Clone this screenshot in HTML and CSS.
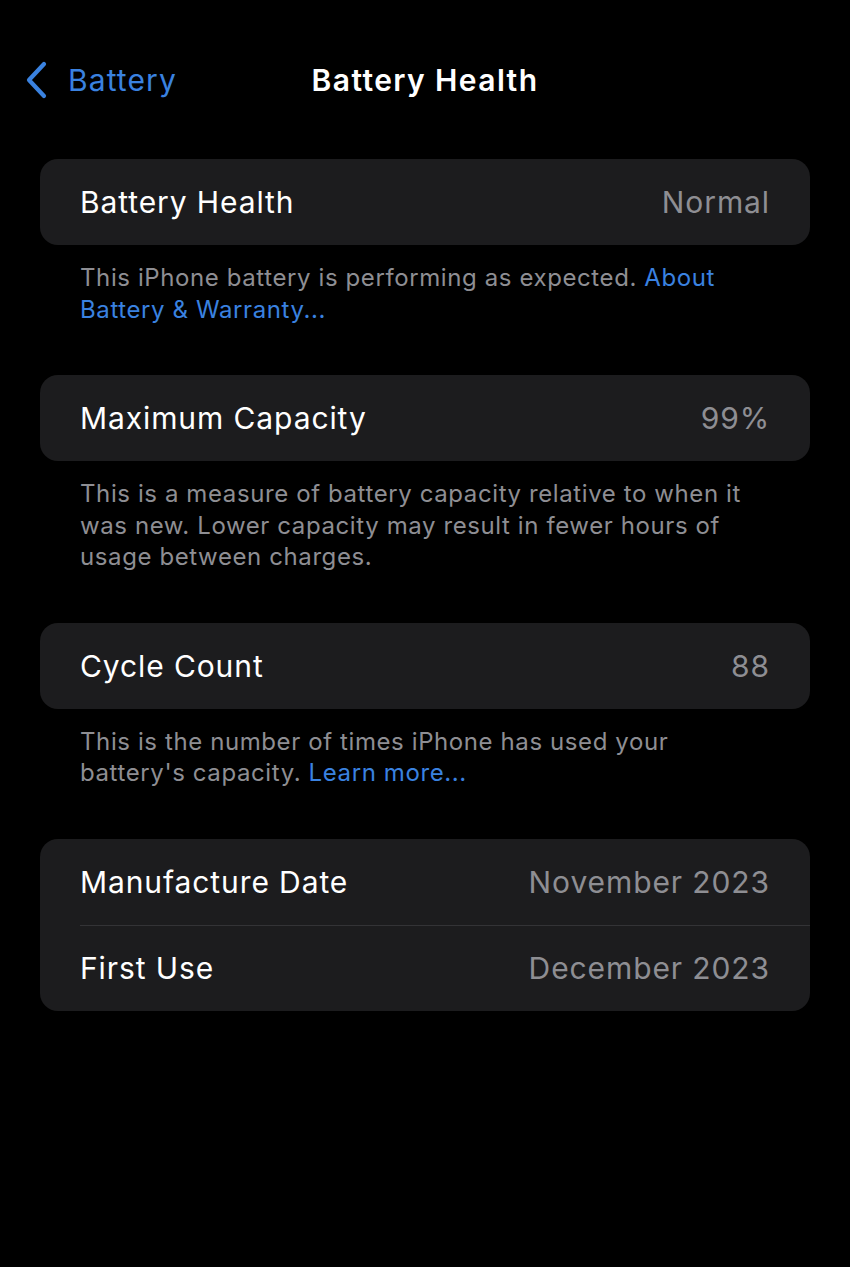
FILE: index.html
```html
<!DOCTYPE html>
<html lang="en">
<head>
<meta charset="utf-8">
<link rel="stylesheet" href="styles.css">
</head>
<body>
<div class="screen">
  <header class="nav">
    <div class="back">
      <svg class="chev" width="24" height="38" viewBox="0 0 24 38"><path d="M20 3 L5 19 L20 35" fill="none" stroke="#3a82e0" stroke-width="4.2" stroke-linecap="round" stroke-linejoin="round"/></svg>
      <span class="back-label">Battery</span>
    </div>
    <h1 class="title">Battery Health</h1>
  </header>

  <section class="group">
    <div class="card">
      <div class="row"><span class="label">Battery Health</span><span class="value">Normal</span></div>
    </div>
    <p class="footer">This iPhone battery is performing as expected. <span class="link">About Battery &amp; Warranty...</span></p>
  </section>

  <section class="group">
    <div class="card">
      <div class="row"><span class="label">Maximum Capacity</span><span class="value">99%</span></div>
    </div>
    <p class="footer">This is a measure of battery capacity relative to when it was new. Lower capacity may result in fewer hours of usage between charges.</p>
  </section>

  <section class="group">
    <div class="card">
      <div class="row"><span class="label">Cycle Count</span><span class="value">88</span></div>
    </div>
    <p class="footer">This is the number of times iPhone has used your battery's capacity. <span class="link">Learn more...</span></p>
  </section>

  <section class="group">
    <div class="card">
      <div class="row"><span class="label">Manufacture Date</span><span class="value">November 2023</span></div>
      <div class="row sep"><span class="label">First Use</span><span class="value">December 2023</span></div>
    </div>
  </section>
</div>
</body>
</html>
```

FILE: styles.css
```css
html, body {
  margin: 0;
  padding: 0;
  background: #000;
}
body {
  font-family: "Inter", "Roboto", "Liberation Sans", sans-serif;
  color: #fff;
  width: 850px;
  min-height: 1267px;
}
.screen {
  padding: 0 40px;
}
.nav {
  position: relative;
  height: 159px;
  box-sizing: border-box;
  padding-top: 58px;
}
.back {
  display: flex;
  align-items: center;
  gap: 20px;
  margin-left: -16px;
  height: 44px;
}
.back-label {
  color: #3a82e0;
  font-size: 30px;
  letter-spacing: 1.1px;
}
.title {
  position: absolute;
  left: 0;
  right: 0;
  top: 58px;
  height: 44px;
  line-height: 44px;
  margin: 0;
  text-align: center;
  font-size: 30px;
  font-weight: 600;
  letter-spacing: 1.4px;
}
.group {
  margin-bottom: 50px;
}
.card {
  background: #1c1c1e;
  border-radius: 18px;
  overflow: hidden;
}
.row {
  display: flex;
  justify-content: space-between;
  align-items: center;
  height: 86px;
  padding: 0 40px;
  font-size: 30px;
  letter-spacing: 0.9px;
}
.row.sep {
  position: relative;
}
.row.sep::before {
  content: "";
  position: absolute;
  left: 40px;
  right: 0;
  top: 0;
  height: 1px;
  background: #333336;
}
.value {
  color: #8e8e93;
}
.footer {
  margin: 0;
  padding: 17px 40px 0;
  font-size: 24px;
  line-height: 31.5px;
  letter-spacing: 0.6px;
  color: #8e8e93;
}
.link {
  color: #3a82e0;
}
```
